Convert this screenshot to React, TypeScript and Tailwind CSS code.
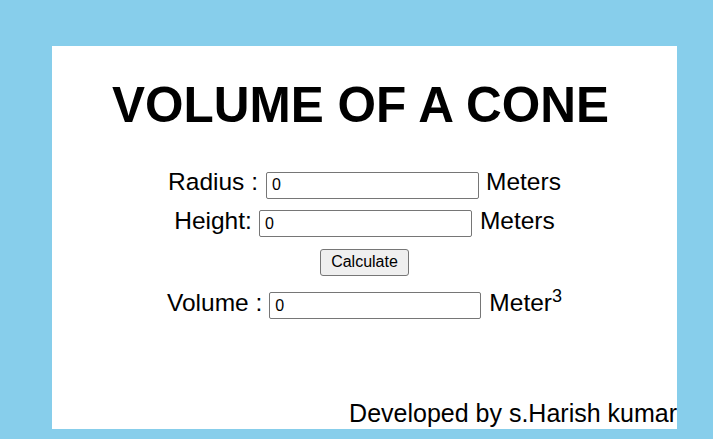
import { useState } from 'react';

export default function App() {
  const [radius, setRadius] = useState('0');
  const [height, setHeight] = useState('0');
  const [volume, setVolume] = useState('0');

  const calculate = () => {
    const r = parseFloat(radius) || 0;
    const h = parseFloat(height) || 0;
    setVolume(String((Math.PI * r * r * h) / 3));
  };

  const inputCls =
    'h-[27px] border border-[#767676] rounded-[2px] px-[5px] text-[16px] text-black bg-white outline-none';

  return (
    <div className="h-[439px] bg-[#87ceeb] pt-[46px] pl-[52px] font-['Liberation_Sans',Arial,sans-serif] text-black">
      <div className="w-[625px] h-[383px] bg-white flex flex-col items-center pt-[31px]">
        <h1 className="mr-[8px] text-[49.5px] leading-[56px] font-bold">VOLUME OF A CONE</h1>

        <div className="mt-[31px] flex items-baseline text-[24.5px]">
          <span>Radius :</span>
          <input
            className={`${inputCls} w-[213px] ml-[8px]`}
            value={radius}
            onChange={(e) => setRadius(e.target.value)}
          />
          <span className="ml-[7px]">Meters</span>
        </div>

        <div className="mt-[2px] flex items-baseline text-[24.5px]">
          <span>Height:</span>
          <input
            className={`${inputCls} w-[213px] ml-[7px]`}
            value={height}
            onChange={(e) => setHeight(e.target.value)}
          />
          <span className="ml-[8px]">Meters</span>
        </div>

        <button
          onClick={calculate}
          className="mt-[9px] w-[89px] h-[27px] bg-[#efefef] border border-[#767676] rounded-[3px] text-[16px] leading-none"
        >
          Calculate
        </button>

        <div className="mt-[9px] flex items-baseline text-[24.5px]">
          <span>Volume :</span>
          <input className={`${inputCls} w-[212px] ml-[7px]`} value={volume} readOnly />
          <span className="ml-[8px]">
            Meter<sup className="text-[18px] top-[-9px]">3</sup>
          </span>
        </div>

        <div className="mt-auto self-end text-[25px] leading-[28px] pb-[2px]">
          Developed by s.Harish kumar
        </div>
      </div>
    </div>
  );
}
